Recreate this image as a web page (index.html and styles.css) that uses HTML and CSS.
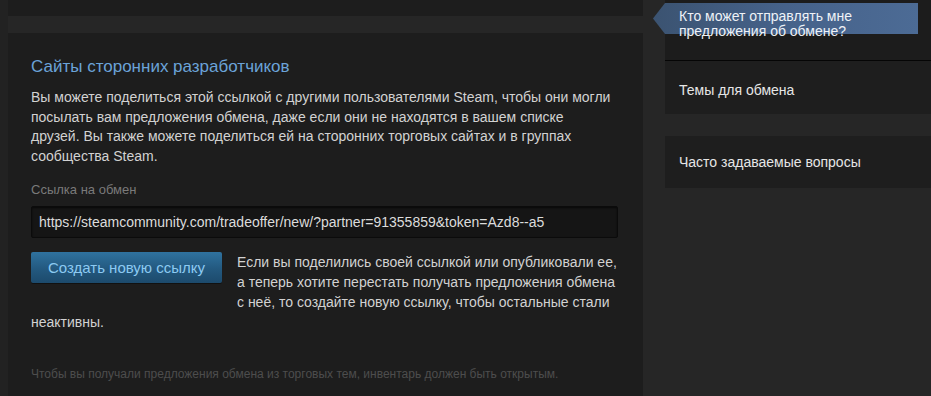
FILE: index.html
```html
<!DOCTYPE html>
<html lang="ru">
<head>
<meta charset="utf-8">
<title>Steam trade offers</title>
<link rel="stylesheet" href="styles.css">
</head>
<body>
<div class="page">
  <div class="main-col">
    <div class="prev-panel"></div>
    <div class="panel">
      <h2 class="heading">Сайты сторонних разработчиков</h2>
      <p class="desc">Вы можете поделиться этой ссылкой с другими пользователями Steam, чтобы они могли посылать вам предложения обмена, даже если они не находятся в вашем списке<br>друзей. Вы также можете поделиться ей на сторонних торговых сайтах и в группах сообщества Steam.</p>
      <div class="label">Ссылка на обмен</div>
      <div class="url-box">https://steamcommunity.com/tradeoffer/new/?partner=91355859&amp;token=Azd8--a5</div>
      <div class="regen">
        <span class="btn">Создать новую ссылку</span>
        Если вы поделились своей ссылкой или опубликовали ее, а теперь хотите перестать получать предложения обмена с неё, то создайте новую ссылку, чтобы остальные стали неактивны.
      </div>
      <div class="note">Чтобы вы получали предложения обмена из торговых тем, инвентарь должен быть открытым.</div>
    </div>
  </div>
  <div class="side-col">
    <div class="side-top">
      <div class="tab"><span class="tab-text">Кто может отправлять мне предложения об обмене?</span></div>
    </div>
    <div class="side-item first">Темы для обмена</div>
    <div class="side-item second">Часто задаваемые вопросы</div>
  </div>
</div>
</body>
</html>
```
FILE: styles.css
```css
html, body {
  margin: 0;
  padding: 0;
}
body {
  width: 931px;
  height: 396px;
  overflow: hidden;
  background: linear-gradient(to right, #222222 8px, #262626 8px);
  font-family: "Liberation Sans", Arial, sans-serif;
  color: #d2d2d2;
}
.page {
  display: flex;
  gap: 22px;
  padding-left: 8px;
}
.main-col {
  width: 635px;
  flex: none;
}
.prev-panel {
  height: 16px;
  background: #1d1d1d;
  margin-bottom: 17px;
}
.panel {
  background: #1d1d1d;
  padding: 24px 23px 0 23px;
  height: 363px;
  box-sizing: border-box;
}
.heading {
  margin: 0;
  font-weight: normal;
  font-size: 17px;
  line-height: 20px;
  color: #6ba3d8;
}
.desc {
  margin: 11px 0 0 0;
  font-size: 14px;
  line-height: 19.5px;
  color: #d2d2d2;
}
.label {
  margin-top: 16px;
  font-size: 13px;
  line-height: 16px;
  color: #7a7a7a;
}
.url-box {
  margin-top: 8px;
  height: 32px;
  width: 587px;
  box-sizing: border-box;
  background: #151515;
  border: 1px solid #0b0b0b;
  border-radius: 2px;
  box-shadow: inset 0 1px 2px rgba(0,0,0,0.6);
  padding: 0 7px;
  font-size: 14px;
  line-height: 30px;
  color: #dcdcdc;
}
.regen {
  margin-top: 14px;
  font-size: 14px;
  line-height: 20px;
  color: #d2d2d2;
}
.btn {
  float: left;
  width: 191px;
  height: 31px;
  box-sizing: border-box;
  margin: 0 15px 16px 0;
  border-radius: 2px;
  background: linear-gradient(to bottom, #2f729f 0%, #23597f 55%, #1c4a6c 100%);
  box-shadow: 0 1px 0 rgba(0,0,0,0.4);
  color: #8ccaf2;
  font-size: 15px;
  line-height: 31px;
  text-align: center;
}
.note {
  clear: both;
  padding-top: 34px;
  font-size: 12px;
  line-height: 16px;
  color: #4d4d4d;
}
.side-col {
  width: 266px;
  flex: none;
}
.side-top {
  position: relative;
  height: 60px;
  background: #1c1c1c;
  border-bottom: 1px solid #050505;
}
.tab {
  position: absolute;
  left: -12px;
  right: 13px;
  top: 3px;
  height: 31px;
  box-sizing: border-box;
  padding: 6px 0 0 26px;
  color: #eef2f7;
  font-size: 14px;
  line-height: 15px;
}
.tab::before {
  content: "";
  position: absolute;
  inset: 0;
  clip-path: polygon(12px 0, 100% 0, 100% 100%, 12px 100%, 0 50%);
  background: linear-gradient(to right, #3b5371 0%, #46628a 50%, #4c6b95 100%);
}
.tab-text {
  position: relative;
}
.side-item {
  background: #1e1e1e;
  padding-left: 14px;
  font-size: 14px;
  line-height: 16px;
  color: #e6e6e6;
}
.side-item.first {
  height: 53px;
  box-sizing: border-box;
  padding-top: 21px;
}
.side-item.second {
  margin-top: 22px;
  height: 52px;
  box-sizing: border-box;
  padding-top: 18px;
}
```
